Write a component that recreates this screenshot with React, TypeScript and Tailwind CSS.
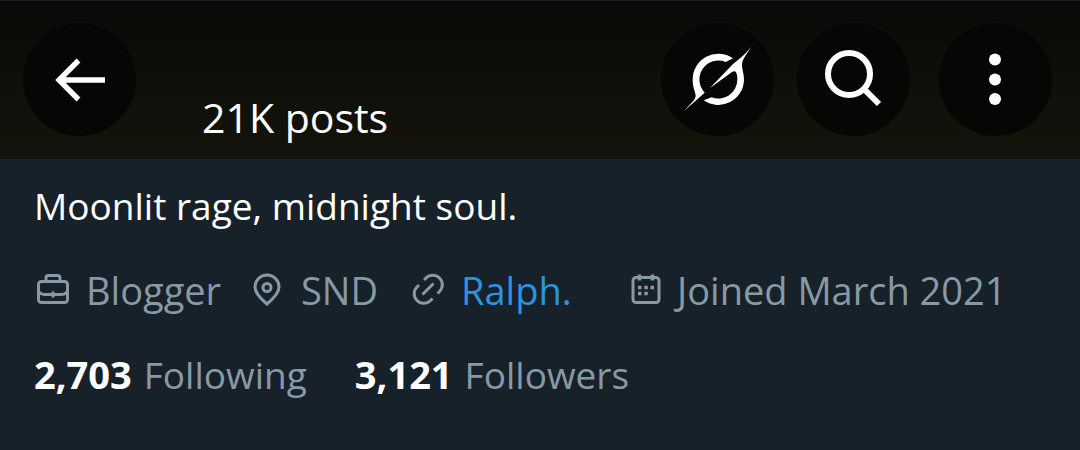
import type { ReactNode } from "react";

function ArrowIcon() {
  return (
    <svg viewBox="0 0 54 54" className="h-[54px] w-[54px]" fill="none" stroke="currentColor" strokeWidth="5.4" aria-hidden="true">
      <path d="M52 27H5M25.5 7.5 6 27l19.5 19.5" />
    </svg>
  );
}

function GrokIcon() {
  return (
    <svg viewBox="42 45 210 207" className="h-[69px] w-[70px]" fill="currentColor" aria-hidden="true">
      <path d="M192 85 170 96A57 57 0 0 0 107 188L45 243C66 220 79 210 80 199C81 189 71 175 71 150A77 77 0 0 1 192 85Z" />
      <path d="M247 50C230 76 219 89 219 106C219 120 225 131 225 149A77 77 0 0 1 104 211L128 202A57 57 0 0 0 205 149C205 139 204 134 202 129C200 123 195 122 189 126L123 174L189 105C201 93 222 81 247 50Z" />
    </svg>
  );
}

function SearchIcon() {
  return (
    <svg viewBox="0 0 60 60" className="h-[60px] w-[60px]" fill="none" stroke="currentColor" strokeWidth="6" aria-hidden="true">
      <circle cx="25" cy="24" r="21" />
      <path d="m40 39 15 15" />
    </svg>
  );
}

function MoreIcon() {
  return (
    <svg viewBox="0 0 54 54" className="h-[54px] w-[54px]" fill="currentColor" aria-hidden="true">
      <circle cx="26" cy="6.5" r="6" />
      <circle cx="26" cy="26.5" r="6" />
      <circle cx="26" cy="46" r="6" />
    </svg>
  );
}

function BriefcaseIcon() {
  return (
    <svg viewBox="0 0 34 34" className="h-[34px] w-[34px] shrink-0" fill="none" stroke="currentColor" strokeWidth="3" aria-hidden="true">
      <rect x="2.5" y="8.5" width="29" height="21" rx="3" />
      <path d="M10 8.5V5a2.5 2.5 0 0 1 2.5-2.5h9A2.5 2.5 0 0 1 24 5v3.5" />
      <path d="M3 19q2 2.5 5 2.5h18q3 0 5-2.5M17 18.5v6" />
    </svg>
  );
}

function PinIcon() {
  return (
    <svg viewBox="0 0 28 34" className="h-[34px] w-[28px] shrink-0" fill="none" stroke="currentColor" strokeWidth="3" aria-hidden="true">
      <path d="M14 31C8 26 2 20.5 2 14a12 12 0 0 1 24 0C26 20.5 20 26 14 31Z" />
      <circle cx="14" cy="14.5" r="4" />
    </svg>
  );
}

function ChainIcon() {
  return (
    <svg viewBox="0 0 34 34" className="h-[34px] w-[34px] shrink-0" fill="none" stroke="currentColor" strokeWidth="3" aria-hidden="true">
      <path d="m11.5 21.5 11-11" />
      <path d="m13 7 2-2a9.5 9.5 0 0 1 13.5 13.5l-2 2" />
      <path d="m8 12-2 2a9.5 9.5 0 0 0 13.5 13.5l2-2" />
    </svg>
  );
}

function CalendarIcon() {
  return (
    <svg viewBox="0 0 30 34" className="h-[34px] w-[30px] shrink-0" fill="none" stroke="currentColor" strokeWidth="3" aria-hidden="true">
      <rect x="2" y="4.5" width="26" height="25" rx="3" />
      <path d="M8.5 1.5v6M21.5 1.5v6" strokeWidth="3.5" />
      <path d="M7 14.5h3.5M13.3 14.5h3.5M19.5 14.5H23M7 20.5h3.5M13.3 20.5h3.5" strokeWidth="3.5" />
    </svg>
  );
}

function RoundButton({ label, children }: { label: string; children: ReactNode }) {
  return (
    <button
      type="button"
      aria-label={label}
      className="flex h-[113px] w-[113px] shrink-0 items-center justify-center rounded-full bg-[#060704] text-white"
    >
      {children}
    </button>
  );
}

function Stat({ value, label }: { value: string; label: string }) {
  return (
    <a href="#" className="flex items-baseline gap-3">
      <span className="text-[38px] font-bold text-white">{value}</span>
      <span>{label}</span>
    </a>
  );
}

export default function App() {
  return (
    <div className="min-h-screen bg-[#17212a] font-['Open_Sans',sans-serif] text-[38px] leading-[52px] text-[#8899a6]">
      <header className="flex items-start border-t border-[#1b1f26] bg-linear-to-b from-[#090a07] to-[#14140c] pt-[22px] pr-7 pb-[23px] pl-[23px]">
        <RoundButton label="Back">
          <ArrowIcon />
        </RoundButton>
        <p className="-mb-[7px] ml-[66px] self-end text-[41px] text-white">21K posts</p>
        <div className="ml-auto flex gap-[23px]">
          <RoundButton label="Grok">
            <GrokIcon />
          </RoundButton>
          <RoundButton label="Search">
            <SearchIcon />
          </RoundButton>
          <div className="ml-[6px]">
            <RoundButton label="More">
              <MoreIcon />
            </RoundButton>
          </div>
        </div>
      </header>

      <main className="px-[34px] pt-[21px]">
        <p className="text-[37px] text-white">Moonlit rage, midnight soul.</p>

        <ul className="mt-8 grid grid-cols-[217px_158px_220px_auto] pl-0.5 whitespace-nowrap">
          <li className="flex items-center gap-4">
            <BriefcaseIcon />
            Blogger
          </li>
          <li className="flex items-center gap-5">
            <PinIcon />
            SND
          </li>
          <li className="flex items-center gap-4">
            <ChainIcon />
            <a href="#" className="text-[#2b93e0]">Ralph.</a>
          </li>
          <li className="flex items-center gap-4">
            <CalendarIcon />
            Joined March 2021
          </li>
        </ul>

        <div className="mt-8 flex gap-12 text-[37px]">
          <Stat value="2,703" label="Following" />
          <Stat value="3,121" label="Followers" />
        </div>
      </main>
    </div>
  );
}
